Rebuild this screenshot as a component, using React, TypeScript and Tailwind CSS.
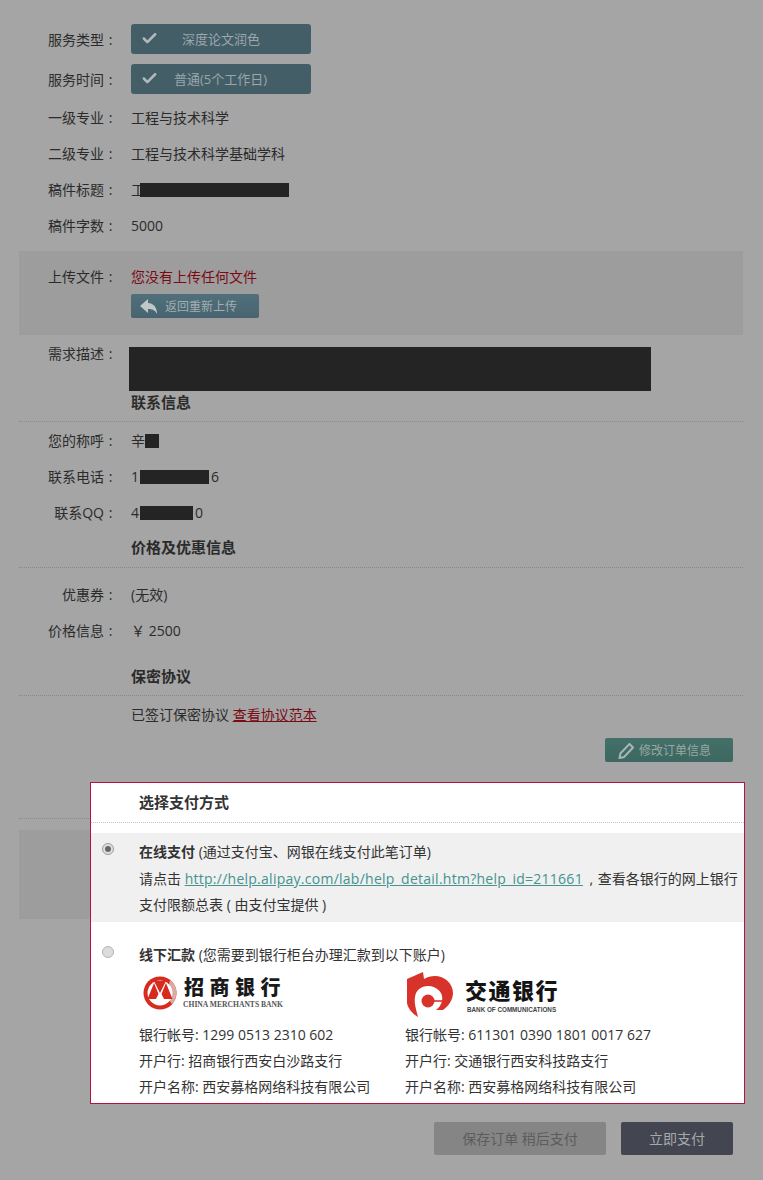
import React from "react";
import { Check } from "lucide-react";

const font = "[font-family:'Open_Sans','Noto_Sans_CJK_SC',sans-serif]";

function Row({ label, children }: { label: string; children: React.ReactNode }) {
  return (
    <div className="flex items-center h-[36px] pl-[19px]">
      <div className="pb-[2px]"><Label text={label} /></div>
      <div className="ml-[14px] pb-[2px] flex items-center text-[14px] text-[#2b2b2b] whitespace-nowrap">{children}</div>
    </div>
  );
}

function ChosenRow({ label, text, pad }: { label: string; text: string; pad: string }) {
  return (
    <div className="flex items-center h-[30px] pl-[19px]">
      <Label text={label} />
      <div className="ml-[14px] w-[180px] h-[30px] rounded-[3px] bg-[#445e68] flex items-center relative">
        <Check className="absolute left-[10px] top-[6px] text-[#b4b9bb]" size={17} strokeWidth={3.5} />
        <span className={`${pad} pt-[2px] text-[13px] text-[#9aa7ab]`}>{text}</span>
      </div>
    </div>
  );
}

function Label({ text }: { text: string }) {
  return (
    <div className="w-[98px] flex justify-end text-[14px] text-[#2b2b2b] whitespace-nowrap">
      <span>{text}</span>
      <span className="w-[13px] text-center">:</span>
    </div>
  );
}

function Heading({ text, h, pb }: { text: string; h: string; pb: string }) {
  return (
    <div className={`${h} ${pb} ml-[19px] mr-[20px] border-b border-dotted border-[#8a8a8a] flex items-end pl-[112px]`}>
      <span className="text-[15px] font-bold text-[#2b2b2b] leading-[20px]">{text}</span>
    </div>
  );
}

function Block({ w }: { w: string }) {
  return <span className={`inline-block ${w} h-[14px] mt-[2px] bg-[#242424]`} />;
}

function CmbLogo() {
  return (
    <div className="flex items-start h-[46px] pl-[4px]">
      <svg width="34" height="34" viewBox="0 0 34 34" className="mt-[4px]">
        <circle cx="17" cy="17" r="16.5" fill="#d92a1e" />
        <path d="M27 4 A16.5 16.5 0 0 1 33.5 17 A16.5 16.5 0 0 1 29 28 L26 24 L26 9 Z" fill="#dcaaa4" />
        <circle cx="17" cy="17" r="12.5" fill="#fff" />
        <path d="M4.5 23 L11 7 L15.5 18 L13 23Z M29.5 23 L23 7 L18.5 18 L21 23Z M11 5 L23 5 L17 17Z" fill="#d92a1e" />
      </svg>
      <div className="ml-[7px] mt-[1px] flex flex-col">
        <span className="text-[20px] leading-[30px] font-black tracking-[5.5px] text-[#1a1a1a] whitespace-nowrap">招商银行</span>
        <span className="text-[7.6px] leading-[8px] mt-[-2px] -ml-[1px] text-[#555] font-bold whitespace-nowrap [font-family:'Liberation_Serif',serif]">CHINA MERCHANTS BANK</span>
      </div>
    </div>
  );
}

function BocomLogo() {
  return (
    <div className="flex items-start h-[46px]">
      <svg width="48" height="48" viewBox="0 0 48 48" className="mt-[-1px] ml-[1px]">
        <path d="M17 1 L1 8 L1 32 C2 38 7 43 12 46 C10 38 8 32 9 26 C10 19 15 15 22 15 C31 15 38 22 36 30 C35 34 33 37 30 39 L37 39 C43 35 47 28 47 22 C47 12 38 5 29 5 C25 5 21 6 18 8 Z" fill="#d8332a" />
        <circle cx="22" cy="30" r="6.5" fill="#d8332a" />
        <path d="M22 30 H36" stroke="#d8332a" strokeWidth="1.6" fill="none" />
      </svg>
      <div className="ml-[11px] mt-[4px] flex flex-col">
        <span className="text-[22px] leading-[28px] font-black tracking-[1.5px] text-[#141414] whitespace-nowrap">交通银行</span>
        <span className="text-[6.3px] leading-[8px] mt-[2px] ml-[2px] text-[#444] font-bold whitespace-nowrap [font-family:'Liberation_Sans',sans-serif]">BANK OF COMMUNICATIONS</span>
      </div>
    </div>
  );
}

function Bank({ logo, lines, w }: { logo: React.ReactNode; lines: string[]; w: string }) {
  return (
    <div className={w}>
      {logo}
      <div className="mt-[4px]">
        {lines.map((l) => (
          <div key={l} className="h-[26px] leading-[26px] text-[14px] text-[#333] whitespace-nowrap">{l}</div>
        ))}
      </div>
    </div>
  );
}

export default function App() {
  return (
    <div className={`relative w-[763px] h-[1180px] overflow-hidden bg-[#a5a5a5] ${font}`}>
      <div className="pt-[24px]">
        <ChosenRow label="服务类型" text="深度论文润色" pad="pl-[51px]" />
        <div className="h-[10px]" />
        <ChosenRow label="服务时间" text="普通(5个工作日)" pad="pl-[43px]" />
        <div className="h-[6px]" />
        <Row label="一级专业">工程与技术科学</Row>
        <Row label="二级专业">工程与技术科学基础学科</Row>
        <Row label="稿件标题">
          <span>工</span>
          <span className="inline-block w-[149px] h-[14px] mt-[2px] bg-[#242424] -ml-[5px]" />
        </Row>
        <Row label="稿件字数">5000</Row>

        <div className="mt-[7px] ml-[19px] mr-[20px] h-[84px] bg-[#9d9d9d]">
          <div className="-ml-[19px] pt-[8px]">
            <Row label="上传文件"><span className="text-[#7a0a14]">您没有上传任何文件</span></Row>
            <div className="ml-[131px] w-[128px] h-[24px] -mt-[1px] pt-[1px] rounded-[2px] bg-gradient-to-b from-[#50707c] to-[#486470] flex items-center">
              <svg width="18" height="16" viewBox="0 0 18 16" className="ml-[9px]">
                <path d="M8 0 L0 7 L8 14 L8 10 C12 10 15 11 17 15 C17 9 14 4 8 4Z" fill="#bfc7c9" />
              </svg>
              <span className="ml-[7px] text-[12px] text-[#a3aeb1]">返回重新上传</span>
            </div>
          </div>
        </div>

        <div className="flex items-start h-[56px] pl-[19px]">
          <div className="mt-[8px]"><Label text="需求描述" /></div>
          <div className="ml-[12px] mt-[12px] w-[522px] h-[44px] bg-[#242424]" />
        </div>

        <Heading text="联系信息" h="h-[31px]" pb="pb-[9px]" />
        <div className="h-[1px]" />
        <Row label="您的称呼">
          <span>辛</span>
          <span className="inline-block w-[14px] h-[14px] mt-[2px] bg-[#242424]" />
        </Row>
        <Row label="联系电话">
          <span>1</span>
          <span className="ml-[1px] flex"><Block w="w-[69px]" /></span>
          <span className="ml-[2px]">6</span>
        </Row>
        <Row label="联系QQ">
          <span>4</span>
          <span className="ml-[1px] flex"><Block w="w-[53px]" /></span>
          <span className="ml-[2px]">0</span>
        </Row>
        <Heading text="价格及优惠信息" h="h-[37px]" pb="pb-[10px]" />
        <div className="h-[9px]" />
        <Row label="优惠券">(无效)</Row>
        <Row label="价格信息">￥ 2500</Row>
        <Heading text="保密协议" h="h-[47px]" pb="pb-[9px]" />
        <div className="h-[1px]" />
        <div className="flex items-center h-[36px] pb-[2px] pl-[131px] text-[14px] text-[#2b2b2b] whitespace-nowrap">
          已签订保密协议&nbsp;<span className="text-[#7a0a14] underline">查看协议范本</span>
        </div>

        <div className="flex justify-end pr-[30px] mt-[5px]">
          <div className="w-[128px] h-[24px] pt-[1px] rounded-[2px] bg-gradient-to-b from-[#44706a] to-[#3d6760] flex items-center">
            <svg width="16" height="16" viewBox="0 0 16 16" className="ml-[13px]">
              <path d="M11.5 1 L15 4.5 L6 14 L1.5 15 L2.5 10.2 Z" fill="none" stroke="#a8b5b2" strokeWidth="2" />
            </svg>
            <span className="ml-[5px] text-[12px] text-[#99a9a5]">修改订单信息</span>
          </div>
        </div>

        <div className="mt-[56px] ml-[19px] mr-[20px] border-t border-dotted border-[#8a8a8a]" />
        <div className="mt-[11px] ml-[19px] mr-[20px] h-[89px] bg-[#9d9d9d]" />

        <div className="mt-[203px] pr-[30px] flex justify-end gap-[15px]">
          <div className="w-[172px] h-[33px] rounded-[2px] bg-[#858585] flex items-center justify-center text-[14px] text-[#5c5c5c]">保存订单 稍后支付</div>
          <div className="w-[112px] h-[33px] rounded-[2px] bg-[#434650] flex items-center justify-center text-[14px] text-[#a6a8ac]">立即支付</div>
        </div>
      </div>

      <div className="absolute left-[90px] top-[782px] w-[655px] h-[322px] bg-white border border-[#b5123e]">
        <div className="h-[40px] border-b border-dotted border-[#c4c4c4] pl-[48px] flex items-center">
          <span className="text-[15px] font-bold text-[#333]">选择支付方式</span>
        </div>
        <div className="mt-[10px] h-[89px] bg-[#f0f0f0] relative pl-[48px] pt-[6px] text-[14px] text-[#333]">
          <span className="absolute left-[11px] top-[10px] w-[12px] h-[12px] rounded-full bg-[#e0e0e0] border border-[#9a9a9a] flex items-center justify-center">
            <span className="w-[6px] h-[6px] rounded-full bg-[#666]" />
          </span>
          <div className="h-[26px] leading-[26px] whitespace-nowrap"><b>在线支付</b> (通过支付宝、网银在线支付此笔订单)</div>
          <div className="h-[27px] leading-[27px] whitespace-nowrap">
            请点击 <span className="text-[#44938f] underline tracking-[0.26px]">http://help.alipay.com/lab/help_detail.htm?help_id=211661</span> <span className="ml-[3px]">,</span> <span className="ml-[1px]">查看各银行的网上银行</span>
          </div>
          <div className="h-[26px] leading-[26px] whitespace-nowrap">支付限额总表 ( 由支付宝提供 )</div>
        </div>
        <div className="relative pl-[48px] pt-[20px]">
          <span className="absolute left-[11px] top-[24px] w-[12px] h-[12px] rounded-full bg-[#dcdcdc] border border-[#b5b5b5]" />
          <div className="h-[26px] leading-[26px] text-[14px] text-[#333] whitespace-nowrap"><b>线下汇款</b> (您需要到银行柜台办理汇款到以下账户)</div>
          <div className="flex mt-[4px]">
            <Bank w="w-[266px]" logo={<CmbLogo />} lines={["银行帐号: 1299 0513 2310 602", "开户行: 招商银行西安白沙路支行", "开户名称: 西安募格网络科技有限公司"]} />
            <Bank w="w-[300px]" logo={<BocomLogo />} lines={["银行帐号: 611301 0390 1801 0017 627", "开户行: 交通银行西安科技路支行", "开户名称: 西安募格网络科技有限公司"]} />
          </div>
        </div>
      </div>
    </div>
  );
}
